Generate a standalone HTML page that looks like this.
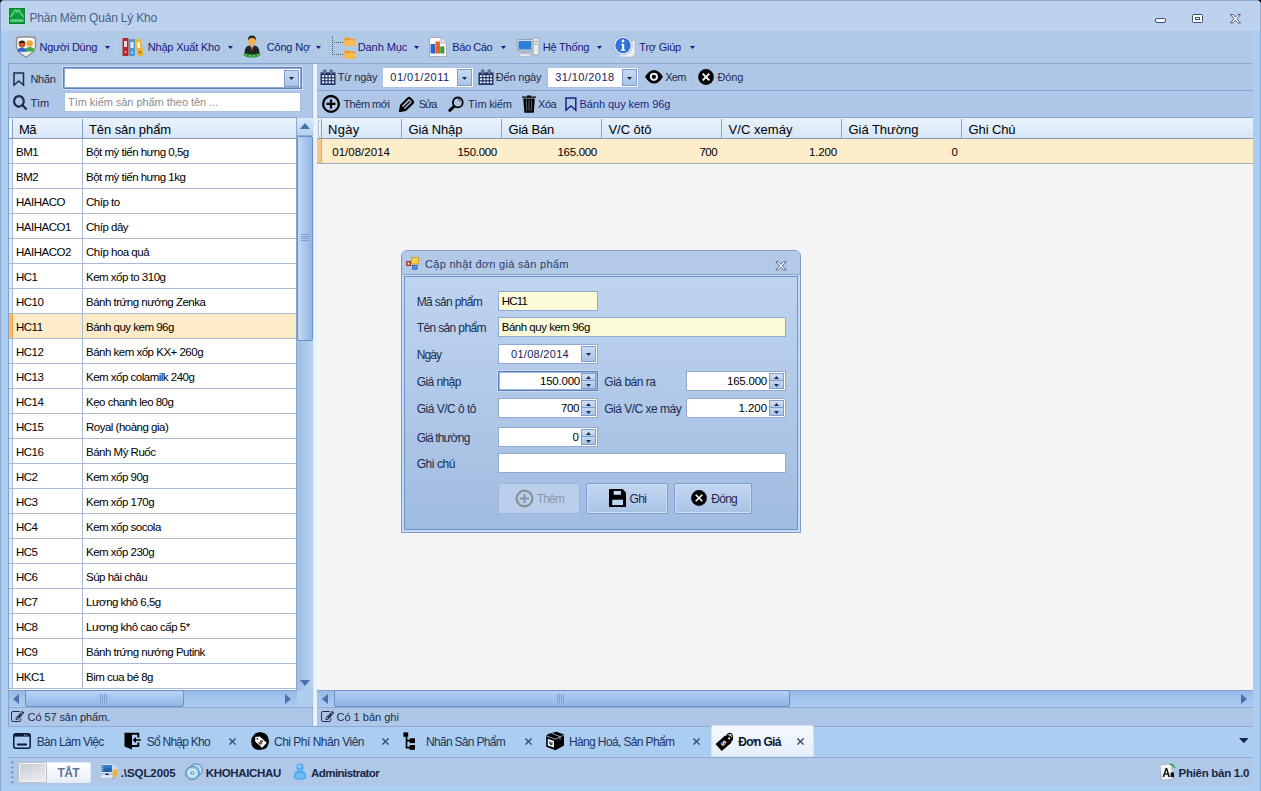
<!DOCTYPE html>
<html lang="vi"><head><meta charset="utf-8"><title>Phần Mềm Quản Lý Kho</title>
<style>
html,body{margin:0;padding:0;background:#000;}
body{width:1261px;height:791px;overflow:hidden;font-family:"Liberation Sans",sans-serif;font-size:11px;color:#1c2a4a;}
#win{position:absolute;left:0;top:0;width:1261px;height:791px;background:#abcdf1;border-radius:5px 5px 0 0;overflow:hidden;}
#win div,#win span.t,#win svg.ic{position:absolute;box-sizing:border-box;}
.t{white-space:pre;line-height:16px;height:16px;}
.lr{left:9px;width:287px;height:25px;border-bottom:1px solid #a9b9d6;}
.rt{font-size:11.5px;letter-spacing:-0.5px;color:#000;}

</style></head>
<body>
<div id="win">
<div style="left:0px;top:0px;width:1261px;height:31px;background:#bdd2ec;"></div>
<div style="left:0px;top:0px;width:1261px;height:1px;background:#8fa8cb;"></div>
<div style="left:0px;top:0px;width:1px;height:791px;background:#8aa6cd;"></div>
<div style="left:1260px;top:0px;width:1px;height:791px;background:#8faccf;"></div>
<svg class="ic" style="left:8px;top:7px" width="18" height="18" viewBox="0 0 18 18"><rect x="0.5" y="0.5" width="17" height="17" fill="none" stroke="#b4e6d8" stroke-width="1"/><rect x="1" y="1" width="16" height="16" fill="#0f9a3c"/><rect x="1.5" y="1.5" width="15" height="15" fill="none" stroke="#0a8138" stroke-width="1"/><path d="M2.4 10 L7.4 2.8 L9 4.8 L10.6 2.8 L15.6 10" stroke="#86ee9f" stroke-width="1.1" fill="none"/><path d="M5.6 9 L9 4.8 L12.4 9" stroke="#3fc066" stroke-width="0.8" fill="none"/><rect x="2.4" y="12.4" width="13.2" height="2.4" fill="#7fe09a" opacity="0.8"/></svg>
<span class="t" style="left:29.5px;top:9.5px;font-size:12px;letter-spacing:-0.20px;color:#4a5f8c;">Phần Mềm Quản Lý Kho</span>
<svg class="ic" style="left:1150px;top:10px" width="100" height="18" viewBox="0 0 100 18"><rect x="5.5" y="8.5" width="10" height="4" rx="1.5" fill="#fff" stroke="#3b4d78"/><rect x="42.5" y="4.5" width="10" height="8" rx="1" fill="#fff" stroke="#3b4d78"/><rect x="45.5" y="7.5" width="4" height="2" fill="#fff" stroke="#3b4d78"/><path d="M80.5 4.5 h2.5 l2.5 2.6 l2.5 -2.6 h2.5 l-3.6 4.2 l3.6 4.2 h-2.5 l-2.5 -2.6 l-2.5 2.6 h-2.5 l3.6 -4.2 z" fill="#fff" stroke="#3b4d78" stroke-width="0.9"/></svg>
<div style="left:8px;top:31px;width:1244px;height:33px;background:#b0c9e7;border-bottom:1px solid #8fa9cf;"></div>
<span class="t" style="left:39.5px;top:39px;font-size:11px;letter-spacing:-0.29px;color:#15187a;">Người Dùng</span>
<svg class="ic" style="left:105px;top:46.2px" width="5" height="3" viewBox="0 0 5 3"><path d="M0 0 H5 L2.5 3 Z" fill="#15187a"/></svg>
<span class="t" style="left:147.7px;top:39px;font-size:11px;letter-spacing:-0.18px;color:#15187a;">Nhập Xuất Kho</span>
<svg class="ic" style="left:227.5px;top:46.2px" width="5" height="3" viewBox="0 0 5 3"><path d="M0 0 H5 L2.5 3 Z" fill="#15187a"/></svg>
<span class="t" style="left:266.7px;top:39px;font-size:11px;letter-spacing:-0.17px;color:#15187a;">Công Nợ</span>
<svg class="ic" style="left:315.5px;top:46.2px" width="5" height="3" viewBox="0 0 5 3"><path d="M0 0 H5 L2.5 3 Z" fill="#15187a"/></svg>
<span class="t" style="left:357.7px;top:39px;font-size:11px;letter-spacing:-0.07px;color:#15187a;">Danh Mục</span>
<svg class="ic" style="left:413.5px;top:46.2px" width="5" height="3" viewBox="0 0 5 3"><path d="M0 0 H5 L2.5 3 Z" fill="#15187a"/></svg>
<span class="t" style="left:452.3px;top:39px;font-size:11px;letter-spacing:-0.40px;color:#15187a;">Báo Cáo</span>
<svg class="ic" style="left:500.5px;top:46.2px" width="5" height="3" viewBox="0 0 5 3"><path d="M0 0 H5 L2.5 3 Z" fill="#15187a"/></svg>
<span class="t" style="left:542.7px;top:39px;font-size:11px;letter-spacing:-0.19px;color:#15187a;">Hệ Thống</span>
<svg class="ic" style="left:597px;top:46.2px" width="5" height="3" viewBox="0 0 5 3"><path d="M0 0 H5 L2.5 3 Z" fill="#15187a"/></svg>
<span class="t" style="left:639.3px;top:39px;font-size:11px;letter-spacing:-0.22px;color:#15187a;">Trợ Giúp</span>
<svg class="ic" style="left:689.5px;top:46.2px" width="5" height="3" viewBox="0 0 5 3"><path d="M0 0 H5 L2.5 3 Z" fill="#15187a"/></svg>
<svg class="ic" style="left:14.5px;top:36px" width="22" height="22" viewBox="0 0 22 22"><path d="M1.6 3.4 Q1.6 1.4 3.6 1.3 Q11 0.2 18.4 1.3 Q20.4 1.4 20.4 3.4 V11 Q19.6 16.4 11 21.2 Q2.4 16.4 1.6 11 Z" fill="#fafafa" stroke="#8f8f8f" stroke-width="1.5"/><path d="M2.6 12 Q4 16 11 20 Q18 16 19.4 12 Z" fill="#e9e9e9"/><circle cx="14.7" cy="7.6" r="3.3" fill="#f0a83e"/><path d="M10.2 15.4 Q10.2 11 14.7 11 Q19.2 11 19.2 15.4 Z" fill="#3faa45"/><circle cx="7" cy="8.2" r="3.3" fill="#c4561f"/><path d="M3.7 7.6 Q4 4.6 7 4.6 Q10 4.6 10.3 7.6 Q7 5.8 3.7 7.6 Z" fill="#2a1a12"/><path d="M2.6 15.8 Q2.6 11.6 7 11.6 Q11.4 11.6 11.4 15.8 Z" fill="#3a63d0"/></svg>
<div style="left:115px;top:36px;width:1px;height:22px;background:#b9cfec;"></div>
<svg class="ic" style="left:122px;top:37px" width="23" height="21" viewBox="0 0 23 21"><rect x="0.5" y="1" width="6" height="18" rx="1" fill="#b3262c"/><rect x="2" y="4" width="3" height="6" fill="#f0d9d9"/><circle cx="3.5" cy="15" r="1" fill="#e9c7c7"/><rect x="7" y="2" width="6" height="17" rx="1" fill="#4a9bd0"/><rect x="8.5" y="5" width="3" height="6" fill="#e3eef7"/><circle cx="10" cy="15.5" r="1" fill="#cfe3f1"/><g transform="rotate(-12 17 10)"><rect x="14" y="2" width="6" height="17" rx="1" fill="#eeb32b"/><rect x="15.5" y="5" width="3" height="6" fill="#fbf0d2"/><circle cx="17" cy="15.5" r="1" fill="#7a5a10"/></g></svg>
<svg class="ic" style="left:242px;top:35px" width="20" height="23" viewBox="0 0 20 23"><ellipse cx="10" cy="19.6" rx="8.6" ry="2.9" fill="#2f9a3c"/><path d="M3 19.6 h2 M7 20.8 h2 M11 20.8 h2 M15 19.6 h2 M9 18.6 h2" stroke="#8fdc8f" stroke-width="0.9"/><path d="M2.6 18.6 Q2.2 11.4 7.4 10.4 L12.6 10.4 Q17.8 11.4 17.4 18.6 Q10 20.2 2.6 18.6 Z" fill="#1c2b22"/><path d="M8.2 10.4 L10 15.4 L11.8 10.4 Z" fill="#f3f3f3"/><path d="M9.6 11 h0.8 l0.5 3.2 l-0.9 1.2 l-0.9 -1.2 z" fill="#a3262c"/><ellipse cx="10" cy="6" rx="3.9" ry="4.6" fill="#efb152"/><path d="M6 5.4 Q5.6 0.6 10 0.6 Q14.4 0.6 14 5.4 Q12.6 2.8 10 3 Q7.4 2.8 6 5.4 Z" fill="#2b2620"/></svg>
<div style="left:325px;top:36px;width:1px;height:22px;background:#b9cfec;"></div>
<svg class="ic" style="left:331px;top:35px" width="25" height="25" viewBox="0 0 25 25"><rect x="1" y="1" width="1" height="1" fill="#4f5a66"/><rect x="1" y="3" width="1" height="1" fill="#4f5a66"/><rect x="1" y="5" width="1" height="1" fill="#4f5a66"/><rect x="1" y="7" width="1" height="1" fill="#4f5a66"/><rect x="1" y="9" width="1" height="1" fill="#4f5a66"/><rect x="1" y="11" width="1" height="1" fill="#4f5a66"/><rect x="1" y="13" width="1" height="1" fill="#4f5a66"/><rect x="1" y="15" width="1" height="1" fill="#4f5a66"/><rect x="1" y="17" width="1" height="1" fill="#4f5a66"/><rect x="1" y="19" width="1" height="1" fill="#4f5a66"/><rect x="3" y="7" width="1" height="1" fill="#4f5a66"/><rect x="5" y="7" width="1" height="1" fill="#4f5a66"/><rect x="7" y="7" width="1" height="1" fill="#4f5a66"/><rect x="9" y="7" width="1" height="1" fill="#4f5a66"/><rect x="11" y="7" width="1" height="1" fill="#4f5a66"/><rect x="3" y="19" width="1" height="1" fill="#4f5a66"/><rect x="5" y="19" width="1" height="1" fill="#4f5a66"/><rect x="7" y="19" width="1" height="1" fill="#4f5a66"/><rect x="9" y="19" width="1" height="1" fill="#4f5a66"/><rect x="11" y="19" width="1" height="1" fill="#4f5a66"/><path d="M13.4 3.4 Q13.4 2.6 14.2 2.6 H17.4 L18.6 3.8 H23 Q23.8 3.8 23.8 4.6 V10.2 Q23.8 11 23 11 H14.2 Q13.4 11 13.4 10.2 Z" fill="#f39a1e"/><path d="M13.4 6 Q18 4.6 23.8 5.4 V10.2 Q23.8 11 23 11 H14.2 Q13.4 11 13.4 10.2 Z" fill="#fdbb55"/><path d="M13.4 16.2 Q13.4 15.4 14.2 15.4 H17.4 L18.6 16.6 H23 Q23.8 16.6 23.8 17.4 V23 Q23.8 23.8 23 23.8 H14.2 Q13.4 23.8 13.4 23 Z" fill="#f39a1e"/><path d="M13.4 18.8 Q18 17.4 23.8 18.2 V23 Q23.8 23.8 23 23.8 H14.2 Q13.4 23.8 13.4 23 Z" fill="#fdbb55"/></svg>
<svg class="ic" style="left:428px;top:36px" width="20" height="22" viewBox="0 0 20 22"><path d="M1.5 1.5 H13 L18.5 7 V20.5 H1.5 Z" fill="#fbfbfb" stroke="#a7adb8"/><path d="M13 1.5 V7 H18.5" fill="#e4e8ee" stroke="#a7adb8"/><rect x="2.6" y="8" width="4.6" height="9.5" fill="#2f62c6"/><rect x="7.4" y="5.6" width="4.6" height="11.9" fill="#e8642a"/><rect x="12.2" y="10.4" width="4.2" height="7.1" fill="#3d9b3f"/></svg>
<svg class="ic" style="left:516px;top:37px" width="24" height="21" viewBox="0 0 24 21"><rect x="17" y="1" width="6" height="17" rx="1" fill="#e9ebee" stroke="#9aa1ab" stroke-width="0.8"/><rect x="18.5" y="4" width="3" height="1" fill="#8d949e"/><rect x="18.5" y="6.5" width="3" height="1" fill="#8d949e"/><rect x="1" y="2.5" width="16" height="11.5" rx="1" fill="#d8dce2" stroke="#8d949e" stroke-width="0.8"/><rect x="2.5" y="4" width="13" height="8.5" fill="#2b7fd6"/><rect x="7" y="14.5" width="4" height="2" fill="#aab0b9"/><ellipse cx="9" cy="18" rx="6.5" ry="1.8" fill="#e4e7ea" stroke="#9aa1ab" stroke-width="0.6"/></svg>
<svg class="ic" style="left:613px;top:35px" width="24" height="24" viewBox="0 0 24 24"><path d="M6 6 H22 V20 Q18 23 12 22 H6 Z" fill="#f1f2f4" stroke="#b4bac4" stroke-width="0.8"/><circle cx="10" cy="10.5" r="8.5" fill="#2f73d8" stroke="#e8f0fb" stroke-width="1.6"/><circle cx="10" cy="10.5" r="9.4" fill="none" stroke="#7e9fd0" stroke-width="0.6"/><circle cx="10" cy="6" r="1.4" fill="#fff"/><path d="M8 8.8 h3.2 v5.7 h1.2 v1.3 h-4.6 v-1.3 h1.2 v-4.4 h-1 z" fill="#fff"/></svg>
<div style="left:8px;top:63px;width:305px;height:664px;background:#afc7e7;border:1px solid #86a3cf;border-right:1px solid #9fb9de;"></div>
<div style="left:313px;top:64px;width:4px;height:662px;background:linear-gradient(90deg,#d3e2f5,#eff5fc 45%,#e6effa);"></div>
<svg class="ic" style="left:13px;top:72px" width="12" height="15" viewBox="0 0 12 15"><path d="M1 1 H10.5 V13.2 L5.75 9 L1 13.2 Z" fill="none" stroke="#1c2b4d" stroke-width="1.5" stroke-linejoin="miter"/></svg>
<span class="t" style="left:30.5px;top:71px;font-size:11px;letter-spacing:-0.32px;color:#1c2b4d;">Nhãn</span>
<div style="left:63px;top:67px;width:239px;height:22px;background:#fff;border:1px solid #5f7fb8;box-shadow:0 0 0 1px #d0dff4, inset 0 0 0 1px #8fa9d4;"></div>
<div style="left:284px;top:70px;width:15px;height:17px;background:linear-gradient(#c7daf2,#a9c4e8);border:1px solid #7f9dcc;"></div>
<svg class="ic" style="left:289px;top:77px" width="5" height="3" viewBox="0 0 5 3"><path d="M0 0 H5 L2.5 3 Z" fill="#1c2b4d"/></svg>
<svg class="ic" style="left:13px;top:95px" width="14" height="15" viewBox="0 0 14 15"><path fill="#1c2b4d" transform="translate(-0.000,12.692) scale(0.00841,-0.00901)" d="M1020.5 387.5Q1152 519 1152.0 704.0Q1152 889 1020.5 1020.5Q889 1152 704.0 1152.0Q519 1152 387.5 1020.5Q256 889 256.0 704.0Q256 519 387.5 387.5Q519 256 704.0 256.0Q889 256 1020.5 387.5ZM1664 -128Q1664 -180 1626.0 -218.0Q1588 -256 1536 -256Q1482 -256 1446 -218L1103 124Q924 0 704 0Q561 0 430.5 55.5Q300 111 205.5 205.5Q111 300 55.5 430.5Q0 561 0.0 704.0Q0 847 55.5 977.5Q111 1108 205.5 1202.5Q300 1297 430.5 1352.5Q561 1408 704.0 1408.0Q847 1408 977.5 1352.5Q1108 1297 1202.5 1202.5Q1297 1108 1352.5 977.5Q1408 847 1408 704Q1408 484 1284 305L1627 -38Q1664 -75 1664 -128Z"/></svg>
<span class="t" style="left:30.5px;top:94.5px;font-size:11px;letter-spacing:-0.15px;color:#1c2b4d;">Tìm</span>
<div style="left:64px;top:92px;width:237px;height:20px;background:#fff;border:1px solid #a9c0e2;"></div>
<span class="t" style="left:68px;top:94px;font-size:11px;letter-spacing:-0.05px;color:#8c8c8c;">Tìm kiếm sản phẩm theo tên ...</span>
<div style="left:9px;top:118px;width:288px;height:572px;background:#fff;"></div>
<div style="left:9px;top:117px;width:288px;height:22px;background:linear-gradient(#eaf3fd,#d6e6f8);border-bottom:1px solid #8797b3;border-top:1px solid #8ba6d0;"></div>
<div style="left:12px;top:119px;width:1px;height:19px;background:#86a3cf;"></div>
<div style="left:10px;top:120px;width:1px;height:17px;background:#fff;"></div>
<div style="left:82px;top:119px;width:1px;height:19px;background:#86a3cf;"></div>
<span class="t" style="left:19px;top:122px;font-size:13px;letter-spacing:-0.53px;color:#000;">Mã</span>
<span class="t" style="left:89px;top:122px;font-size:13px;letter-spacing:-0.09px;color:#000;">Tên sản phẩm</span>
<div class="lr" style="top:139px;"><div style="left:0;top:0;width:4px;height:24px;background:#dfeaf8;border-right:1px solid #a9b9d6"></div><span class="t rt" style="left:7px;top:5px">BM1</span><div style="left:73px;top:0;width:1px;height:24px;background:#a9b9d6"></div><span class="t rt" style="left:77px;top:5px">Bột mỳ tiến hưng 0,5g</span></div>
<div class="lr" style="top:164px;"><div style="left:0;top:0;width:4px;height:24px;background:#dfeaf8;border-right:1px solid #a9b9d6"></div><span class="t rt" style="left:7px;top:5px">BM2</span><div style="left:73px;top:0;width:1px;height:24px;background:#a9b9d6"></div><span class="t rt" style="left:77px;top:5px">Bột mỳ tiến hưng 1kg</span></div>
<div class="lr" style="top:189px;"><div style="left:0;top:0;width:4px;height:24px;background:#dfeaf8;border-right:1px solid #a9b9d6"></div><span class="t rt" style="left:7px;top:5px">HAIHACO</span><div style="left:73px;top:0;width:1px;height:24px;background:#a9b9d6"></div><span class="t rt" style="left:77px;top:5px">Chíp to</span></div>
<div class="lr" style="top:214px;"><div style="left:0;top:0;width:4px;height:24px;background:#dfeaf8;border-right:1px solid #a9b9d6"></div><span class="t rt" style="left:7px;top:5px">HAIHACO1</span><div style="left:73px;top:0;width:1px;height:24px;background:#a9b9d6"></div><span class="t rt" style="left:77px;top:5px">Chíp dây</span></div>
<div class="lr" style="top:239px;"><div style="left:0;top:0;width:4px;height:24px;background:#dfeaf8;border-right:1px solid #a9b9d6"></div><span class="t rt" style="left:7px;top:5px">HAIHACO2</span><div style="left:73px;top:0;width:1px;height:24px;background:#a9b9d6"></div><span class="t rt" style="left:77px;top:5px">Chíp hoa quả</span></div>
<div class="lr" style="top:264px;"><div style="left:0;top:0;width:4px;height:24px;background:#dfeaf8;border-right:1px solid #a9b9d6"></div><span class="t rt" style="left:7px;top:5px">HC1</span><div style="left:73px;top:0;width:1px;height:24px;background:#a9b9d6"></div><span class="t rt" style="left:77px;top:5px">Kem xốp to 310g</span></div>
<div class="lr" style="top:289px;"><div style="left:0;top:0;width:4px;height:24px;background:#dfeaf8;border-right:1px solid #a9b9d6"></div><span class="t rt" style="left:7px;top:5px">HC10</span><div style="left:73px;top:0;width:1px;height:24px;background:#a9b9d6"></div><span class="t rt" style="left:77px;top:5px">Bánh trứng nướng Zenka</span></div>
<div class="lr" style="top:314px;background:#fdebc8;"><div style="left:0;top:0;width:4px;height:24px;background:#f7b967;border-right:1px solid #f0a54a"></div><span class="t rt" style="left:7px;top:5px">HC11</span><div style="left:73px;top:0;width:1px;height:24px;background:#a9b9d6"></div><span class="t rt" style="left:77px;top:5px">Bánh quy kem 96g</span></div>
<div class="lr" style="top:339px;"><div style="left:0;top:0;width:4px;height:24px;background:#dfeaf8;border-right:1px solid #a9b9d6"></div><span class="t rt" style="left:7px;top:5px">HC12</span><div style="left:73px;top:0;width:1px;height:24px;background:#a9b9d6"></div><span class="t rt" style="left:77px;top:5px">Bánh kem xốp KX+ 260g</span></div>
<div class="lr" style="top:364px;"><div style="left:0;top:0;width:4px;height:24px;background:#dfeaf8;border-right:1px solid #a9b9d6"></div><span class="t rt" style="left:7px;top:5px">HC13</span><div style="left:73px;top:0;width:1px;height:24px;background:#a9b9d6"></div><span class="t rt" style="left:77px;top:5px">Kem xốp colamilk 240g</span></div>
<div class="lr" style="top:389px;"><div style="left:0;top:0;width:4px;height:24px;background:#dfeaf8;border-right:1px solid #a9b9d6"></div><span class="t rt" style="left:7px;top:5px">HC14</span><div style="left:73px;top:0;width:1px;height:24px;background:#a9b9d6"></div><span class="t rt" style="left:77px;top:5px">Kẹo chanh leo 80g</span></div>
<div class="lr" style="top:414px;"><div style="left:0;top:0;width:4px;height:24px;background:#dfeaf8;border-right:1px solid #a9b9d6"></div><span class="t rt" style="left:7px;top:5px">HC15</span><div style="left:73px;top:0;width:1px;height:24px;background:#a9b9d6"></div><span class="t rt" style="left:77px;top:5px">Royal (hoàng gia)</span></div>
<div class="lr" style="top:439px;"><div style="left:0;top:0;width:4px;height:24px;background:#dfeaf8;border-right:1px solid #a9b9d6"></div><span class="t rt" style="left:7px;top:5px">HC16</span><div style="left:73px;top:0;width:1px;height:24px;background:#a9b9d6"></div><span class="t rt" style="left:77px;top:5px">Bánh Mỳ Ruốc</span></div>
<div class="lr" style="top:464px;"><div style="left:0;top:0;width:4px;height:24px;background:#dfeaf8;border-right:1px solid #a9b9d6"></div><span class="t rt" style="left:7px;top:5px">HC2</span><div style="left:73px;top:0;width:1px;height:24px;background:#a9b9d6"></div><span class="t rt" style="left:77px;top:5px">Kem xốp 90g</span></div>
<div class="lr" style="top:489px;"><div style="left:0;top:0;width:4px;height:24px;background:#dfeaf8;border-right:1px solid #a9b9d6"></div><span class="t rt" style="left:7px;top:5px">HC3</span><div style="left:73px;top:0;width:1px;height:24px;background:#a9b9d6"></div><span class="t rt" style="left:77px;top:5px">Kem xốp 170g</span></div>
<div class="lr" style="top:514px;"><div style="left:0;top:0;width:4px;height:24px;background:#dfeaf8;border-right:1px solid #a9b9d6"></div><span class="t rt" style="left:7px;top:5px">HC4</span><div style="left:73px;top:0;width:1px;height:24px;background:#a9b9d6"></div><span class="t rt" style="left:77px;top:5px">Kem xốp socola</span></div>
<div class="lr" style="top:539px;"><div style="left:0;top:0;width:4px;height:24px;background:#dfeaf8;border-right:1px solid #a9b9d6"></div><span class="t rt" style="left:7px;top:5px">HC5</span><div style="left:73px;top:0;width:1px;height:24px;background:#a9b9d6"></div><span class="t rt" style="left:77px;top:5px">Kem xốp 230g</span></div>
<div class="lr" style="top:564px;"><div style="left:0;top:0;width:4px;height:24px;background:#dfeaf8;border-right:1px solid #a9b9d6"></div><span class="t rt" style="left:7px;top:5px">HC6</span><div style="left:73px;top:0;width:1px;height:24px;background:#a9b9d6"></div><span class="t rt" style="left:77px;top:5px">Súp hải châu</span></div>
<div class="lr" style="top:589px;"><div style="left:0;top:0;width:4px;height:24px;background:#dfeaf8;border-right:1px solid #a9b9d6"></div><span class="t rt" style="left:7px;top:5px">HC7</span><div style="left:73px;top:0;width:1px;height:24px;background:#a9b9d6"></div><span class="t rt" style="left:77px;top:5px">Lương khô 6,5g</span></div>
<div class="lr" style="top:614px;"><div style="left:0;top:0;width:4px;height:24px;background:#dfeaf8;border-right:1px solid #a9b9d6"></div><span class="t rt" style="left:7px;top:5px">HC8</span><div style="left:73px;top:0;width:1px;height:24px;background:#a9b9d6"></div><span class="t rt" style="left:77px;top:5px">Lương khô cao cấp 5*</span></div>
<div class="lr" style="top:639px;"><div style="left:0;top:0;width:4px;height:24px;background:#dfeaf8;border-right:1px solid #a9b9d6"></div><span class="t rt" style="left:7px;top:5px">HC9</span><div style="left:73px;top:0;width:1px;height:24px;background:#a9b9d6"></div><span class="t rt" style="left:77px;top:5px">Bánh trứng nướng Putink</span></div>
<div class="lr" style="top:664px;"><div style="left:0;top:0;width:4px;height:24px;background:#dfeaf8;border-right:1px solid #a9b9d6"></div><span class="t rt" style="left:7px;top:5px">HKC1</span><div style="left:73px;top:0;width:1px;height:24px;background:#a9b9d6"></div><span class="t rt" style="left:77px;top:5px">Bim cua bé 8g</span></div>
<div style="left:296px;top:118px;width:17px;height:572px;background:linear-gradient(90deg,#9dbde6,#b9d2f0);border-left:1px solid #8aa5cf;"></div>
<div style="left:297px;top:118px;width:16px;height:18px;background:linear-gradient(#d9e8f9,#b5cfee);border-bottom:1px solid #8eabd4;"></div>
<svg class="ic" style="left:300px;top:123px" width="10" height="6" viewBox="0 0 10 6"><path d="M0 6 L5 0 L10 6 Z" fill="#4a6fae"/></svg>
<div style="left:297px;top:136px;width:16px;height:205px;background:linear-gradient(90deg,#c3d9f5,#8fb4e6);border:1px solid #6a8fc9;border-radius:2px;"></div>
<svg class="ic" style="left:301px;top:234px" width="8" height="8" viewBox="0 0 8 8"><path d="M0 0.5 H8 M0 2.5 H8 M0 4.5 H8 M0 6.5 H8" stroke="#7f9fcf" stroke-width="1"/></svg>
<svg class="ic" style="left:300px;top:680px" width="10" height="6" viewBox="0 0 10 6"><path d="M0 0 L5 6 L10 0 Z" fill="#4a6fae"/></svg>
<div style="left:9px;top:690px;width:288px;height:18px;background:linear-gradient(#98bae8,#aecbf0);border-top:1px solid #7f9fd0;border-bottom:1px solid #8eabd4;"></div>
<div style="left:25px;top:690px;width:159px;height:17px;background:linear-gradient(#b9d3f4,#92b6e7);border:1px solid #6a8fc9;border-radius:2px;"></div>
<svg class="ic" style="left:100px;top:694px" width="8" height="9" viewBox="0 0 8 9"><path d="M0.5 0 V9 M2.5 0 V9 M4.5 0 V9 M6.5 0 V9" stroke="#7f9fcf" stroke-width="1"/></svg>
<svg class="ic" style="left:13px;top:694px" width="6" height="10" viewBox="0 0 6 10"><path d="M6 0 L0 5 L6 10 Z" fill="#4a6fae"/></svg>
<svg class="ic" style="left:285px;top:694px" width="6" height="10" viewBox="0 0 6 10"><path d="M0 0 L6 5 L0 10 Z" fill="#4a6fae"/></svg>
<div style="left:297px;top:690px;width:16px;height:18px;background:#adcdee;border-bottom:1px solid #8eabd4;"></div>
<svg class="ic" style="left:11px;top:711px" width="13" height="11" viewBox="0 0 13 11"><path fill="#1c2b4d" transform="translate(0.000,11.000) scale(0.00729,-0.00781)" d="M888 352 1004 468 852 620 736 504V448H832V352ZM1295 1071 945 721Q928 704 944.0 688.0Q960 672 977 689L1327 1039Q1344 1056 1328.0 1072.0Q1312 1088 1295 1071ZM1408 478V288Q1408 169 1323.5 84.5Q1239 0 1120 0H288Q169 0 84.5 84.5Q0 169 0 288V1120Q0 1239 84.5 1323.5Q169 1408 288 1408H1120Q1183 1408 1237 1383Q1252 1376 1255 1360Q1258 1343 1246 1331L1197 1282Q1183 1268 1165 1274Q1142 1280 1120 1280H288Q222 1280 175.0 1233.0Q128 1186 128 1120V288Q128 222 175.0 175.0Q222 128 288 128H1120Q1186 128 1233.0 175.0Q1280 222 1280 288V414Q1280 427 1289 436L1353 500Q1368 515 1388.0 507.0Q1408 499 1408 478ZM1312 1216 1600 928 928 256H640V544ZM1756 1084 1664 992 1376 1280 1468 1372Q1496 1400 1536.0 1400.0Q1576 1400 1604 1372L1756 1220Q1784 1192 1784.0 1152.0Q1784 1112 1756 1084Z"/></svg>
<span class="t" style="left:27.6px;top:709px;font-size:11px;letter-spacing:-0.09px;color:#1c2b4d;">Có 57 sản phẩm.</span>
<div style="left:317px;top:64px;width:936px;height:663px;background:#afc7e7;"></div>
<div style="left:317px;top:90px;width:936px;height:1px;background:#86a3cf;"></div>
<svg class="ic" style="left:320px;top:69px" width="16" height="17" viewBox="0 0 16 17"><rect x="0.5" y="3.5" width="15" height="12.5" fill="#1f3263"/><rect x="2.0" y="6.2" width="2.2" height="1.9" fill="#e9eef8"/><rect x="2.0" y="9.3" width="2.2" height="1.9" fill="#e9eef8"/><rect x="2.0" y="12.4" width="2.2" height="1.9" fill="#e9eef8"/><rect x="5.3" y="6.2" width="2.2" height="1.9" fill="#e9eef8"/><rect x="5.3" y="9.3" width="2.2" height="1.9" fill="#e9eef8"/><rect x="5.3" y="12.4" width="2.2" height="1.9" fill="#e9eef8"/><rect x="8.6" y="6.2" width="2.2" height="1.9" fill="#e9eef8"/><rect x="8.6" y="9.3" width="2.2" height="1.9" fill="#e9eef8"/><rect x="8.6" y="12.4" width="2.2" height="1.9" fill="#e9eef8"/><rect x="11.9" y="6.2" width="2.2" height="1.9" fill="#e9eef8"/><rect x="11.9" y="9.3" width="2.2" height="1.9" fill="#e9eef8"/><rect x="11.9" y="12.4" width="2.2" height="1.9" fill="#e9eef8"/><rect x="3.6" y="0.8" width="2.4" height="4.6" rx="1" fill="#7f93b8" stroke="#1f3263" stroke-width="0.7"/><rect x="10" y="0.8" width="2.4" height="4.6" rx="1" fill="#7f93b8" stroke="#1f3263" stroke-width="0.7"/></svg>
<span class="t" style="left:337.7px;top:69px;font-size:11px;letter-spacing:-0.19px;color:#1c2b4d;">Từ ngày</span>
<div style="left:382px;top:67px;width:92px;height:21px;background:#fff;border:1px solid #a9c0e2;"></div><div style="left:457px;top:69px;width:15px;height:17px;background:linear-gradient(#c7daf2,#a9c4e8);border:1px solid #7f9dcc;"></div><svg class="ic" style="left:462px;top:76.5px" width="5" height="3" viewBox="0 0 5 3"><path d="M0 0 H5 L2.5 3 Z" fill="#1c2b4d"/></svg><span class="t" style="left:390.3px;top:69px;font-size:11px;letter-spacing:0.51px;color:#141c5a;">01/01/2011</span>
<svg class="ic" style="left:478px;top:69px" width="16" height="17" viewBox="0 0 16 17"><rect x="0.5" y="3.5" width="15" height="12.5" fill="#1f3263"/><rect x="2.0" y="6.2" width="2.2" height="1.9" fill="#e9eef8"/><rect x="2.0" y="9.3" width="2.2" height="1.9" fill="#e9eef8"/><rect x="2.0" y="12.4" width="2.2" height="1.9" fill="#e9eef8"/><rect x="5.3" y="6.2" width="2.2" height="1.9" fill="#e9eef8"/><rect x="5.3" y="9.3" width="2.2" height="1.9" fill="#e9eef8"/><rect x="5.3" y="12.4" width="2.2" height="1.9" fill="#e9eef8"/><rect x="8.6" y="6.2" width="2.2" height="1.9" fill="#e9eef8"/><rect x="8.6" y="9.3" width="2.2" height="1.9" fill="#e9eef8"/><rect x="8.6" y="12.4" width="2.2" height="1.9" fill="#e9eef8"/><rect x="11.9" y="6.2" width="2.2" height="1.9" fill="#e9eef8"/><rect x="11.9" y="9.3" width="2.2" height="1.9" fill="#e9eef8"/><rect x="11.9" y="12.4" width="2.2" height="1.9" fill="#e9eef8"/><rect x="3.6" y="0.8" width="2.4" height="4.6" rx="1" fill="#7f93b8" stroke="#1f3263" stroke-width="0.7"/><rect x="10" y="0.8" width="2.4" height="4.6" rx="1" fill="#7f93b8" stroke="#1f3263" stroke-width="0.7"/></svg>
<span class="t" style="left:495.8px;top:69px;font-size:11px;letter-spacing:-0.20px;color:#1c2b4d;">Đến ngày</span>
<div style="left:547px;top:67px;width:92px;height:21px;background:#fff;border:1px solid #a9c0e2;"></div><div style="left:622px;top:69px;width:15px;height:17px;background:linear-gradient(#c7daf2,#a9c4e8);border:1px solid #7f9dcc;"></div><svg class="ic" style="left:627px;top:76.5px" width="5" height="3" viewBox="0 0 5 3"><path d="M0 0 H5 L2.5 3 Z" fill="#1c2b4d"/></svg><span class="t" style="left:555.3px;top:69px;font-size:11px;letter-spacing:0.41px;color:#141c5a;">31/10/2018</span>
<svg class="ic" style="left:645px;top:70px" width="18" height="14" viewBox="0 0 18 14"><path d="M0 6.8 Q4.2 0 9 0 Q13.8 0 18 6.8 Q13.8 13.6 9 13.6 Q4.2 13.6 0 6.8 Z" fill="#000"/><circle cx="8.9" cy="6.8" r="3.1" fill="none" stroke="#e6edf8" stroke-width="2"/></svg>
<span class="t" style="left:665.3px;top:69px;font-size:11px;letter-spacing:-0.81px;color:#1c2b4d;">Xem</span>
<div style="left:691px;top:69px;width:1px;height:17px;background:#a6bfe2;"></div>
<svg class="ic" style="left:698px;top:69.3px" width="16" height="16" viewBox="0 0 16 16"><circle cx="8" cy="8" r="7.9" fill="#000"/><path d="M4.7 4.7 L11.3 11.3 M11.3 4.7 L4.7 11.3" stroke="#fff" stroke-width="1.9"/></svg>
<span class="t" style="left:717.5px;top:69px;font-size:11px;letter-spacing:-0.12px;color:#1c2b4d;">Đóng</span>
<svg class="ic" style="left:321px;top:94px" width="20" height="20" viewBox="0 0 20 20"><circle cx="10" cy="9.9" r="7.9" fill="none" stroke="#000" stroke-width="2.3"/><path d="M10 5.4 V14.4 M5.5 9.9 H14.5" stroke="#000" stroke-width="2.2"/></svg>
<span class="t" style="left:343.4px;top:96px;font-size:11px;letter-spacing:-0.49px;color:#1c2b4d;">Thêm mới</span>
<svg class="ic" style="left:396px;top:93px" width="22" height="22" viewBox="0 0 22 22"><g transform="translate(3.5,18.4) rotate(-44.5)"><path d="M0.8 0 L5.5 -3.2 H15.4 Q16.6 -3.2 16.6 -2 V2 Q16.6 3.2 15.4 3.2 H5.5 Z" fill="none" stroke="#000" stroke-width="2.2" stroke-linejoin="round"/><path d="M0 0 L5.4 -3.4 V3.4 Z" fill="#000"/><path d="M5 0 H14.6" stroke="#000" stroke-width="1.4"/></g></svg>
<span class="t" style="left:418.7px;top:96px;font-size:11px;letter-spacing:-1.08px;color:#1c2b4d;">Sửa</span>
<svg class="ic" style="left:447px;top:94px" width="19" height="19" viewBox="0 0 19 19"><circle cx="10.8" cy="8.4" r="4.9" fill="none" stroke="#000" stroke-width="1.8"/><path d="M7.2 12.2 L2.8 16.4" stroke="#000" stroke-width="2.9" stroke-linecap="round"/><path d="M11.2 5.6 Q12.8 5.8 13.4 7.4" stroke="#000" stroke-width="0.9" fill="none"/></svg>
<span class="t" style="left:468px;top:96px;font-size:11px;letter-spacing:-0.19px;color:#1c2b4d;">Tìm kiếm</span>
<div style="left:517px;top:96px;width:1px;height:17px;background:#a6bfe2;"></div>
<svg class="ic" style="left:522px;top:95px" width="14" height="18" viewBox="0 0 14 18"><path d="M5 0.6 H9 V1.4 H14 V2.8 H0 V1.4 H5 Z" fill="#000"/><path d="M1.2 3.4 H12.8 L11.8 17.8 H2.4 Z" fill="#000"/><path d="M4.3 4.5 L4.8 16.2 M7 4.5 V16.2 M9.7 4.5 L9.2 16.2" stroke="#6f7f99" stroke-width="0.8"/></svg>
<span class="t" style="left:538px;top:96px;font-size:11px;letter-spacing:-0.43px;color:#1c2b4d;">Xóa</span>
<svg class="ic" style="left:565px;top:97px" width="12" height="15" viewBox="0 0 12 15"><path d="M1 1 H10.8 V13.2 L5.9 9 L1 13.2 Z" fill="none" stroke="#1a1f8c" stroke-width="1.5"/></svg>
<span class="t" style="left:579.5px;top:96px;font-size:11px;letter-spacing:-0.05px;color:#1a1f8c;">Bánh quy kem 96g</span>
<div style="left:317px;top:118px;width:936px;height:572px;background:#f4f4f4;"></div>
<div style="left:317px;top:117px;width:936px;height:22px;background:linear-gradient(#eaf3fd,#d6e6f8);border-bottom:1px solid #8797b3;border-top:1px solid #8ba6d0;"></div>
<div style="left:318px;top:120px;width:2px;height:17px;background:#f4f8fd;border:1px solid #b3bfd2;border-right:none;"></div>
<div style="left:321px;top:119px;width:1px;height:19px;background:#86a3cf;"></div>
<div style="left:401px;top:119px;width:1px;height:19px;background:#86a3cf;"></div>
<div style="left:501px;top:119px;width:1px;height:19px;background:#86a3cf;"></div>
<div style="left:601px;top:119px;width:1px;height:19px;background:#86a3cf;"></div>
<div style="left:721px;top:119px;width:1px;height:19px;background:#86a3cf;"></div>
<div style="left:841px;top:119px;width:1px;height:19px;background:#86a3cf;"></div>
<div style="left:961px;top:119px;width:1px;height:19px;background:#86a3cf;"></div>
<span class="t" style="left:328px;top:121.5px;font-size:13px;letter-spacing:0.29px;color:#000;">Ngày</span>
<span class="t" style="left:408.5px;top:121.5px;font-size:13px;letter-spacing:-0.14px;color:#000;">Giá Nhập</span>
<span class="t" style="left:508.5px;top:121.5px;font-size:13px;letter-spacing:-0.21px;color:#000;">Giá Bán</span>
<span class="t" style="left:608.5px;top:121.5px;font-size:13px;letter-spacing:-0.05px;color:#000;">V/C ôtô</span>
<span class="t" style="left:728.5px;top:121.5px;font-size:13px;letter-spacing:0.05px;color:#000;">V/C xemáy</span>
<span class="t" style="left:848.5px;top:121.5px;font-size:13px;letter-spacing:-0.05px;color:#000;">Giá Thường</span>
<span class="t" style="left:968.5px;top:121.5px;font-size:13px;letter-spacing:-0.10px;color:#000;">Ghi Chú</span>
<div style="left:317px;top:139px;width:936px;height:25px;background:#fdedcb;border-bottom:1px solid #a3adbd;"></div>
<div style="left:317px;top:139px;width:5px;height:24px;background:#f9c586;border-right:1px solid #f2a654;"></div>
<span class="t" style="left:332.3px;top:144px;font-size:11.5px;letter-spacing:0.01px;color:#000;">01/08/2014</span>
<span class="t" style="left:457.5px;top:144px;font-size:11.5px;letter-spacing:-0.30px;color:#000;">150.000</span>
<span class="t" style="left:557.5px;top:144px;font-size:11.5px;letter-spacing:-0.30px;color:#000;">165.000</span>
<span class="t" style="left:699.5px;top:144px;font-size:11.5px;letter-spacing:-0.56px;color:#000;">700</span>
<span class="t" style="left:809px;top:144px;font-size:11.5px;letter-spacing:-0.16px;color:#000;">1.200</span>
<span class="t" style="left:951.5px;top:144px;font-size:11.5px;letter-spacing:-0.91px;color:#000;">0</span>
<div style="left:317px;top:690px;width:936px;height:18px;background:linear-gradient(#98bae8,#aecbf0);border-top:1px solid #7f9fd0;border-bottom:1px solid #8eabd4;"></div>
<div style="left:334px;top:690px;width:456px;height:17px;background:linear-gradient(#b4cff3,#8fb4e6);border:1px solid #6a8fc9;border-radius:2px;"></div>
<svg class="ic" style="left:557px;top:694px" width="8" height="9" viewBox="0 0 8 9"><path d="M0.5 0 V9 M2.5 0 V9 M4.5 0 V9 M6.5 0 V9" stroke="#7f9fcf" stroke-width="1"/></svg>
<svg class="ic" style="left:322px;top:694px" width="6" height="10" viewBox="0 0 6 10"><path d="M6 0 L0 5 L6 10 Z" fill="#4a6fae"/></svg>
<svg class="ic" style="left:1241px;top:694px" width="6" height="10" viewBox="0 0 6 10"><path d="M0 0 L6 5 L0 10 Z" fill="#4a6fae"/></svg>
<svg class="ic" style="left:321px;top:711px" width="13" height="11" viewBox="0 0 13 11"><path fill="#1c2b4d" transform="translate(0.000,11.000) scale(0.00729,-0.00781)" d="M888 352 1004 468 852 620 736 504V448H832V352ZM1295 1071 945 721Q928 704 944.0 688.0Q960 672 977 689L1327 1039Q1344 1056 1328.0 1072.0Q1312 1088 1295 1071ZM1408 478V288Q1408 169 1323.5 84.5Q1239 0 1120 0H288Q169 0 84.5 84.5Q0 169 0 288V1120Q0 1239 84.5 1323.5Q169 1408 288 1408H1120Q1183 1408 1237 1383Q1252 1376 1255 1360Q1258 1343 1246 1331L1197 1282Q1183 1268 1165 1274Q1142 1280 1120 1280H288Q222 1280 175.0 1233.0Q128 1186 128 1120V288Q128 222 175.0 175.0Q222 128 288 128H1120Q1186 128 1233.0 175.0Q1280 222 1280 288V414Q1280 427 1289 436L1353 500Q1368 515 1388.0 507.0Q1408 499 1408 478ZM1312 1216 1600 928 928 256H640V544ZM1756 1084 1664 992 1376 1280 1468 1372Q1496 1400 1536.0 1400.0Q1576 1400 1604 1372L1756 1220Q1784 1192 1784.0 1152.0Q1784 1112 1756 1084Z"/></svg>
<span class="t" style="left:336.5px;top:709px;font-size:11px;color:#1c2b4d;">Có 1 bản ghi</span>
<div style="left:8px;top:726px;width:1245px;height:32px;background:#abcdf2;border-top:1px solid #8eabd4;border-bottom:1px solid #8eabd4;"></div>
<svg class="ic" style="left:13px;top:733px" width="18" height="16" viewBox="0 0 18 16"><rect x="0.8" y="0.8" width="16.4" height="14.4" rx="2" fill="none" stroke="#0c1a33" stroke-width="1.5"/><rect x="1" y="1" width="16" height="2.6" fill="#0c1a33"/><rect x="4" y="10.5" width="10" height="2" rx="0.6" fill="#0c1a33"/><rect x="11" y="1.6" width="1.2" height="1" fill="#abcdf2"/><rect x="13.2" y="1.6" width="1.2" height="1" fill="#abcdf2"/></svg>
<span class="t" style="left:36.7px;top:733.5px;font-size:12px;letter-spacing:-0.62px;color:#20355f;">Bàn Làm Việc</span>
<svg class="ic" style="left:124px;top:732px" width="17" height="18" viewBox="0 0 17 18"><path d="M0.5 0.8 L8 0.8 L8 17.5 L0.5 14.6 Z" fill="#000"/><path d="M8 1.7 H14.3 V5.6 M14.3 10.4 V14 H8" stroke="#000" stroke-width="1.9" fill="none"/><path d="M16.8 7.2 H12 V5 L8.6 8 L12 11 V8.8 H16.8 Z" fill="#000"/></svg>
<span class="t" style="left:146.7px;top:733.5px;font-size:12px;letter-spacing:-0.74px;color:#20355f;">Sổ Nhập Kho</span>
<svg class="ic" style="left:229px;top:738.0px" width="7" height="7" viewBox="0 0 7 7"><path d="M0.4 0.4 L6.6 6.6 M6.6 0.4 L0.4 6.6" stroke="#33456f" stroke-width="1.25"/></svg>
<svg class="ic" style="left:250px;top:731px" width="20" height="20" viewBox="0 0 20 20"><path d="M8.2 1.6 Q10.5 0.4 12.6 1.8 Q17 2.4 18 6.6 Q20 10.4 18 14 Q16.6 18.4 12 18.6 Q8.4 19.6 5 18 Q1.4 15.6 1.4 11.4 Q0.4 7.4 3.6 4.4 Q5.2 1.6 8.2 1.6 Z" fill="#000"/><g transform="rotate(42 10 10.2)"><path d="M3.6 10.2 L6.6 6.8 H16 V13.6 H6.6 Z" fill="#fff"/><circle cx="6.4" cy="10.2" r="0.8" fill="#000"/><text x="11.4" y="12.6" font-size="6.5" font-weight="700" text-anchor="middle" font-family="Liberation Sans,sans-serif" fill="#000">$</text></g></svg>
<span class="t" style="left:274px;top:733.5px;font-size:12px;letter-spacing:-0.50px;color:#20355f;">Chi Phí Nhân Viên</span>
<svg class="ic" style="left:381.5px;top:738.0px" width="7" height="7" viewBox="0 0 7 7"><path d="M0.4 0.4 L6.6 6.6 M6.6 0.4 L0.4 6.6" stroke="#33456f" stroke-width="1.25"/></svg>
<svg class="ic" style="left:403px;top:732px" width="13" height="19" viewBox="0 0 13 19"><rect x="0.4" y="0.4" width="4.8" height="4.4" fill="#000"/><path d="M3.5 4.6 V15.6 H7 M3.5 8.7 H7" stroke="#000" stroke-width="1.7" fill="none"/><rect x="6.6" y="6.3" width="5.4" height="4.8" fill="#000"/><rect x="6.6" y="13" width="5.4" height="4.8" fill="#000"/></svg>
<span class="t" style="left:426px;top:733.5px;font-size:12px;letter-spacing:-0.70px;color:#20355f;">Nhãn Sản Phẩm</span>
<svg class="ic" style="left:525px;top:738.0px" width="7" height="7" viewBox="0 0 7 7"><path d="M0.4 0.4 L6.6 6.6 M6.6 0.4 L0.4 6.6" stroke="#33456f" stroke-width="1.25"/></svg>
<svg class="ic" style="left:545px;top:731px" width="20" height="20" viewBox="0 0 20 20"><path d="M3 3 L11.4 0.8 L19 3.6 V14.6 L10.4 19.2 L1.2 15.8 V5 Z" fill="#000"/><path d="M1.8 5.2 L10.4 8.2 L18.6 4.2" stroke="#abcdf2" stroke-width="0.8" fill="none"/><path d="M6.6 2.2 L15 5.6 V8.6" stroke="#abcdf2" stroke-width="0.8" fill="none"/><path d="M2.8 7.8 L9 10 V16.6 L2.8 14.4 Z" fill="#eef3fa"/><path d="M4.8 10.4 V13 L7 13.8 V11.2 M5.9 11.4 V13" stroke="#000" stroke-width="0.8" fill="none"/></svg>
<span class="t" style="left:569px;top:733.5px;font-size:12px;letter-spacing:-0.63px;color:#20355f;">Hàng Hoá, Sản Phẩm</span>
<svg class="ic" style="left:692.5px;top:738.0px" width="7" height="7" viewBox="0 0 7 7"><path d="M0.4 0.4 L6.6 6.6 M6.6 0.4 L0.4 6.6" stroke="#33456f" stroke-width="1.25"/></svg>
<div style="left:711px;top:725px;width:103px;height:32px;background:linear-gradient(#f5f9fe,#e4eefa);border:1px solid #d3e2f5;border-radius:2px 2px 0 0;"></div>
<svg class="ic" style="left:714px;top:731px" width="21" height="21" viewBox="0 0 21 21"><g transform="translate(4.6,16.5) rotate(-40.8)"><path d="M0 -4.75 H12.4 L16.4 -2 V2 L12.4 4.75 H0 Z" fill="#000"/><circle cx="14" cy="0" r="1.1" fill="#eef5fd"/><text x="6.6" y="2.6" font-size="7.5" font-weight="700" text-anchor="middle" font-family="Liberation Sans,sans-serif" fill="#fff" transform="rotate(90 6.6 0)">$</text></g><path d="M13.2 8.6 Q11.8 3.4 15.4 2.4 Q19.4 2 18.2 9.6" stroke="#000" stroke-width="1.1" fill="none"/></svg>
<span class="t" style="left:738.2px;top:733.5px;font-size:12px;letter-spacing:-0.66px;font-weight:700;color:#0b1630;">Đơn Giá</span>
<svg class="ic" style="left:797px;top:738.0px" width="7" height="7" viewBox="0 0 7 7"><path d="M0.4 0.4 L6.6 6.6 M6.6 0.4 L0.4 6.6" stroke="#33456f" stroke-width="1.25"/></svg>
<svg class="ic" style="left:1238.8px;top:738px" width="9.6" height="5.2" viewBox="0 0 9.6 5.2"><path d="M0 0 H9.6 L4.8 5.2 Z" fill="#14264f"/></svg>
<div style="left:8px;top:758px;width:1245px;height:27px;background:#b0c8e7;"></div>
<svg class="ic" style="left:10px;top:760px" width="5" height="25" viewBox="0 0 5 25"><circle cx="2.4" cy="2.50" r="1.05" fill="#6482b4"/><circle cx="2.4" cy="7.45" r="1.05" fill="#6482b4"/><circle cx="2.4" cy="12.40" r="1.05" fill="#6482b4"/><circle cx="2.4" cy="17.35" r="1.05" fill="#6482b4"/><circle cx="2.4" cy="22.30" r="1.05" fill="#6482b4"/></svg>
<div style="left:18px;top:762px;width:73px;height:21px;background:linear-gradient(#ffffff,#e9eef7);border:1px solid #e3ebf7;border-radius:2px;"></div>
<div style="left:19px;top:763px;width:27px;height:19px;background:linear-gradient(160deg,#c9ccd3,#eceef2);border:1px solid #f4f6fa;border-radius:2px;box-shadow:0 0 0 1px #b9bec8;"></div>
<span class="t" style="left:57.5px;top:764.5px;font-size:12px;letter-spacing:-0.68px;font-weight:700;color:#5f7497;">TẮT</span>
<svg class="ic" style="left:100px;top:763px" width="19" height="17" viewBox="0 0 19 17"><rect x="0.9" y="1.4" width="11.6" height="8.2" fill="#f2f5f9"/><rect x="1.5" y="2" width="10.4" height="7" fill="#2565ad"/><path d="M1.5 2 H11.9 V5 Q6 4 1.5 7 Z" fill="#3a86d0" opacity="0.7"/><rect x="2.2" y="3" width="1" height="1" fill="#cfe4f8"/><rect x="2.2" y="5" width="1" height="1" fill="#cfe4f8"/><rect x="2.2" y="7" width="1" height="1" fill="#cfe4f8"/><ellipse cx="7" cy="11.4" rx="1.7" ry="0.8" fill="#1a1a1a"/><path d="M1.4 12.2 H12 L12.6 14.6 H0.8 Z" fill="#eceff3"/><rect x="13.4" y="3.4" width="1" height="3.6" fill="#f2f2f2"/><rect x="15.8" y="3.4" width="1" height="3.6" fill="#f2f2f2"/><path d="M12.8 6.6 H17.6 V11.4 L16.4 13 V14.6 H14 V13 L12.8 11.4 Z" fill="#f4b32c"/><path d="M14 14.4 L13 16.4" stroke="#9a6a2a" stroke-width="0.8"/></svg>
<span class="t" style="left:120.7px;top:764.5px;font-size:11.5px;letter-spacing:-0.07px;font-weight:700;color:#172646;">.\SQL2005</span>
<svg class="ic" style="left:184px;top:762px" width="20" height="20" viewBox="0 0 20 20"><ellipse cx="11.8" cy="8.2" rx="6.6" ry="6.2" transform="rotate(-20 11.8 8.2)" fill="#b9dcf2" stroke="#4f86b6" stroke-width="0.9"/><ellipse cx="8.4" cy="11" rx="6.8" ry="6.4" transform="rotate(-20 8.4 11)" fill="#a4d2ee" stroke="#3f79ad" stroke-width="0.9"/><ellipse cx="8.4" cy="11" rx="4.2" ry="3.9" transform="rotate(-20 8.4 11)" fill="#dff0fa"/><ellipse cx="8.4" cy="11" rx="2" ry="1.8" fill="#8fc4e6" stroke="#4f86b6" stroke-width="0.7"/><circle cx="8.4" cy="11" r="0.8" fill="#eef6fc"/></svg>
<span class="t" style="left:205.7px;top:764.5px;font-size:11.5px;letter-spacing:-0.33px;font-weight:700;color:#172646;">KHOHAICHAU</span>
<svg class="ic" style="left:293px;top:763px" width="14" height="18" viewBox="0 0 14 18"><path d="M0.8 15.4 Q0.4 9.6 3.6 8.2 Q7 6.6 10.4 8.2 Q13.6 9.6 13.2 15.4 Q7 18 0.8 15.4 Z" fill="#4aa9f2"/><path d="M2 14.6 Q2 10 7 9.4 Q12 10 12 14.6 Q7 16.6 2 14.6 Z" fill="#7cc4f8" opacity="0.7"/><circle cx="7" cy="4.2" r="3.6" fill="#4aa9f2"/><circle cx="6.4" cy="3.4" r="2" fill="#9ad4fb" opacity="0.8"/></svg>
<span class="t" style="left:311px;top:764.5px;font-size:11.5px;letter-spacing:-0.55px;font-weight:700;color:#172646;">Administrator</span>
<svg class="ic" style="left:1159px;top:763px" width="17" height="18" viewBox="0 0 17 18"><path d="M1 2 L12 0.8 L14.8 16 L2.6 17.2 Z" fill="#f4f5f7" stroke="#9aa3b0" stroke-width="0.6"/><path d="M3.6 14 L6.6 5 H8.2 L11 14 H9.3 L8.7 11.8 H5.9 L5.2 14 Z M6.3 10.4 H8.3 L7.4 7 Z" fill="#111"/><path d="M10.5 1.2 Q14.8 1 15.6 5" stroke="#2fa33a" stroke-width="1.6" fill="none"/><rect x="11.6" y="9.4" width="3.4" height="4.8" fill="#111"/></svg>
<span class="t" style="left:1178.5px;top:764.5px;font-size:11.5px;letter-spacing:-0.28px;font-weight:700;color:#172646;">Phiên bản 1.0</span>
<div style="left:401px;top:250px;width:400px;height:283px;background:#c3dcf9;border:1px solid #8199be;border-radius:6px 6px 0 0;"></div>
<div style="left:402px;top:251px;width:398px;height:23px;background:#b2c9e8;border-radius:5px 5px 0 0;"></div>
<div style="left:402px;top:274px;width:398px;height:1px;background:#8ba7d1;"></div>
<div style="left:404px;top:276px;width:394px;height:254px;background:linear-gradient(#bed4ef,#b0c8e8 50%,#a0bce1);border:1px solid #7493c4;"></div>
<svg class="ic" style="left:406px;top:257px" width="13" height="13" viewBox="0 0 13 13"><rect x="5.5" y="0.5" width="7" height="6.5" fill="#f6d04d" stroke="#c79a1c" stroke-width="0.8"/><rect x="0.6" y="4.6" width="4" height="4" fill="#e1533a" stroke="#9c2a18" stroke-width="0.8"/><rect x="1.8" y="5.8" width="1.6" height="1.6" fill="#fff"/><rect x="6.5" y="8.4" width="4.6" height="3.8" fill="#5b8fe0" stroke="#2f5fb0" stroke-width="0.8"/></svg>
<span class="t" style="left:425px;top:256px;font-size:11px;letter-spacing:0.30px;color:#2b3c68;">Cập nhật đơn giá sản phẩm</span>
<svg class="ic" style="left:774.5px;top:260.5px" width="12" height="10" viewBox="0 0 12 10"><path d="M0.8 0.7 h2.7 l2.5 2.6 l2.5 -2.6 h2.7 l-3.8 4.1 l3.8 4.1 h-2.7 l-2.5 -2.6 l-2.5 2.6 h-2.7 l3.8 -4.1 z" fill="#fff" stroke="#46577f" stroke-width="0.9"/></svg>
<span class="t" style="left:416.7px;top:293.5px;font-size:12px;letter-spacing:-0.67px;color:#1c2b4d;">Mã sản phẩm</span>
<div style="left:498px;top:291px;width:100px;height:20px;background:#fbfbd9;border:1px solid #8fa9d2;"></div>
<span class="t" style="left:501.7px;top:292.5px;font-size:11.5px;letter-spacing:-0.82px;color:#000;">HC11</span>
<span class="t" style="left:416.7px;top:319.5px;font-size:12px;letter-spacing:-0.63px;color:#1c2b4d;">Tên sản phẩm</span>
<div style="left:498px;top:317px;width:288px;height:20px;background:#fbfbd9;border:1px solid #8fa9d2;"></div>
<span class="t" style="left:501.7px;top:318.5px;font-size:11.5px;letter-spacing:-0.48px;color:#000;">Bánh quy kem 96g</span>
<span class="t" style="left:416.7px;top:346.5px;font-size:12px;letter-spacing:-0.93px;color:#1c2b4d;">Ngày</span>
<div style="left:498px;top:344px;width:100px;height:20px;background:#fff;border:1px solid #8fa9d2;"></div>
<span class="t" style="left:511px;top:346px;font-size:11px;letter-spacing:0.29px;color:#141c5a;">01/08/2014</span>
<div style="left:581px;top:346px;width:15px;height:16px;background:linear-gradient(#c7daf2,#a9c4e8);border:1px solid #7f9dcc;"></div>
<svg class="ic" style="left:586px;top:353px" width="5" height="3" viewBox="0 0 5 3"><path d="M0 0 H5 L2.5 3 Z" fill="#1c2b4d"/></svg>
<span class="t" style="left:416.7px;top:374px;font-size:12px;letter-spacing:-0.58px;color:#1c2b4d;">Giá nhập</span>
<div style="left:498px;top:371px;width:100px;height:20px;background:#fff;border:1px solid #5b7db8;box-shadow:0 0 0 1px #c9dbf2, inset 0 0 0 1px #9fb8de;"></div><div style="left:581px;top:373px;width:15px;height:8px;background:linear-gradient(#d3e2f5,#b4cceb);border:1px solid #7f9dcc;"></div><div style="left:581px;top:381px;width:15px;height:8px;background:linear-gradient(#c3d7f0,#a9c4e8);border:1px solid #7f9dcc;border-top:none;"></div><svg class="ic" style="left:586px;top:375.5px" width="5" height="3" viewBox="0 0 5 3"><path d="M0 3 L2.5 0 L5 3 Z" fill="#1c2b4d"/></svg><svg class="ic" style="left:586px;top:383.5px" width="5" height="3" viewBox="0 0 5 3"><path d="M0 0 L2.5 3 L5 0 Z" fill="#1c2b4d"/></svg><span class="t" style="left:540px;top:372.5px;font-size:11.5px;letter-spacing:-0.23px;color:#000;">150.000</span>
<span class="t" style="left:604.3px;top:374px;font-size:12px;letter-spacing:-0.48px;color:#1c2b4d;">Giá bán ra</span>
<div style="left:686px;top:371px;width:100px;height:20px;background:#fff;border:1px solid #8fa9d2;"></div><div style="left:769px;top:373px;width:15px;height:8px;background:linear-gradient(#d3e2f5,#b4cceb);border:1px solid #7f9dcc;"></div><div style="left:769px;top:381px;width:15px;height:8px;background:linear-gradient(#c3d7f0,#a9c4e8);border:1px solid #7f9dcc;border-top:none;"></div><svg class="ic" style="left:774px;top:375.5px" width="5" height="3" viewBox="0 0 5 3"><path d="M0 3 L2.5 0 L5 3 Z" fill="#1c2b4d"/></svg><svg class="ic" style="left:774px;top:383.5px" width="5" height="3" viewBox="0 0 5 3"><path d="M0 0 L2.5 3 L5 0 Z" fill="#1c2b4d"/></svg><span class="t" style="left:727px;top:372.5px;font-size:11.5px;letter-spacing:-0.23px;color:#000;">165.000</span>
<span class="t" style="left:416.7px;top:400.5px;font-size:12px;letter-spacing:-0.51px;color:#1c2b4d;">Giá V/C ô tô</span>
<div style="left:498px;top:398px;width:100px;height:20px;background:#fff;border:1px solid #8fa9d2;"></div><div style="left:581px;top:400px;width:15px;height:8px;background:linear-gradient(#d3e2f5,#b4cceb);border:1px solid #7f9dcc;"></div><div style="left:581px;top:408px;width:15px;height:8px;background:linear-gradient(#c3d7f0,#a9c4e8);border:1px solid #7f9dcc;border-top:none;"></div><svg class="ic" style="left:586px;top:402.5px" width="5" height="3" viewBox="0 0 5 3"><path d="M0 3 L2.5 0 L5 3 Z" fill="#1c2b4d"/></svg><svg class="ic" style="left:586px;top:410.5px" width="5" height="3" viewBox="0 0 5 3"><path d="M0 0 L2.5 3 L5 0 Z" fill="#1c2b4d"/></svg><span class="t" style="left:561px;top:399.5px;font-size:11.5px;letter-spacing:-0.40px;color:#000;">700</span>
<span class="t" style="left:604.3px;top:400.5px;font-size:12px;letter-spacing:-0.51px;color:#1c2b4d;">Giá V/C xe máy</span>
<div style="left:686px;top:398px;width:100px;height:20px;background:#fff;border:1px solid #8fa9d2;"></div><div style="left:769px;top:400px;width:15px;height:8px;background:linear-gradient(#d3e2f5,#b4cceb);border:1px solid #7f9dcc;"></div><div style="left:769px;top:408px;width:15px;height:8px;background:linear-gradient(#c3d7f0,#a9c4e8);border:1px solid #7f9dcc;border-top:none;"></div><svg class="ic" style="left:774px;top:402.5px" width="5" height="3" viewBox="0 0 5 3"><path d="M0 3 L2.5 0 L5 3 Z" fill="#1c2b4d"/></svg><svg class="ic" style="left:774px;top:410.5px" width="5" height="3" viewBox="0 0 5 3"><path d="M0 0 L2.5 3 L5 0 Z" fill="#1c2b4d"/></svg><span class="t" style="left:738.5px;top:399.5px;font-size:11.5px;letter-spacing:-0.06px;color:#000;">1.200</span>
<span class="t" style="left:416.7px;top:430px;font-size:12px;letter-spacing:-0.85px;color:#1c2b4d;">Giá thường</span>
<div style="left:498px;top:427px;width:100px;height:20px;background:#fff;border:1px solid #8fa9d2;"></div><div style="left:581px;top:429px;width:15px;height:8px;background:linear-gradient(#d3e2f5,#b4cceb);border:1px solid #7f9dcc;"></div><div style="left:581px;top:437px;width:15px;height:8px;background:linear-gradient(#c3d7f0,#a9c4e8);border:1px solid #7f9dcc;border-top:none;"></div><svg class="ic" style="left:586px;top:431.5px" width="5" height="3" viewBox="0 0 5 3"><path d="M0 3 L2.5 0 L5 3 Z" fill="#1c2b4d"/></svg><svg class="ic" style="left:586px;top:439.5px" width="5" height="3" viewBox="0 0 5 3"><path d="M0 0 L2.5 3 L5 0 Z" fill="#1c2b4d"/></svg><span class="t" style="left:572.5px;top:428.5px;font-size:11.5px;letter-spacing:-0.41px;color:#000;">0</span>
<span class="t" style="left:416.7px;top:456px;font-size:12px;letter-spacing:-0.44px;color:#1c2b4d;">Ghi chú</span>
<div style="left:498px;top:453px;width:288px;height:20px;background:#fff;border:1px solid #8fa9d2;"></div>
<div style="left:498px;top:483px;width:82px;height:31px;background:#b9cfec;border:1px solid #9db6da;border-radius:2px;"></div>
<svg class="ic" style="left:515px;top:489px" width="19" height="19" viewBox="0 0 19 19"><circle cx="9.5" cy="9.5" r="7.9" fill="none" stroke="#8a8f98" stroke-width="2.2"/><path d="M9.5 5 V14 M5 9.5 H14" stroke="#8a929e" stroke-width="2.1"/></svg>
<span class="t" style="left:536.7px;top:490.5px;font-size:12px;letter-spacing:-0.80px;color:#8b96a8;">Thêm</span>
<div style="left:586px;top:483px;width:82px;height:31px;background:linear-gradient(#c3d7f1,#a9c3e6);border:1px solid #7f9ccb;border-radius:2px;box-shadow:inset 0 0 0 1px #cfe0f5;"></div>
<svg class="ic" style="left:609px;top:489px" width="17" height="18" viewBox="0 0 17 18"><path d="M0 0 H13.6 L17 3.4 V18 H0 Z" fill="#000"/><rect x="4.7" y="2" width="7.2" height="3.8" fill="#c9dbf2"/><rect x="3.2" y="10.7" width="10.8" height="5.4" fill="#c0d5f0"/></svg>
<span class="t" style="left:629.4px;top:490.5px;font-size:12px;letter-spacing:-0.56px;color:#1c2b4d;">Ghi</span>
<div style="left:674px;top:483px;width:78px;height:31px;background:linear-gradient(#c3d7f1,#a9c3e6);border:1px solid #7f9ccb;border-radius:2px;box-shadow:inset 0 0 0 1px #cfe0f5;"></div>
<svg class="ic" style="left:691px;top:490px" width="16" height="16" viewBox="0 0 16 16"><circle cx="8" cy="8" r="7.9" fill="#000"/><path d="M4.7 4.7 L11.3 11.3 M11.3 4.7 L4.7 11.3" stroke="#fff" stroke-width="1.6"/></svg>
<span class="t" style="left:711.3px;top:490.5px;font-size:12px;letter-spacing:-0.75px;color:#1c2b4d;">Đóng</span>
</div>
</body></html>
